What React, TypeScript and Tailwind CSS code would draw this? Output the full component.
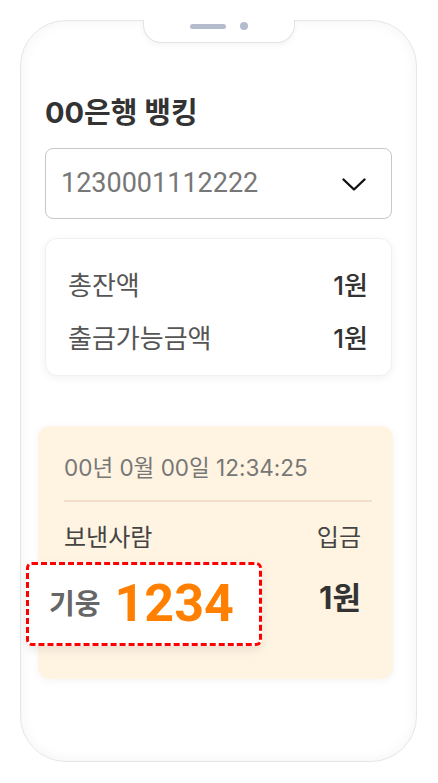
const font = { fontFamily: '"Inter", "Noto Sans CJK KR", sans-serif' }

function Notch() {
  return (
    <div className="absolute left-1/2 top-[-1px] flex h-[23px] w-[152px] -translate-x-1/2 items-center justify-center gap-[14px] rounded-b-[18px] border border-t-0 border-[#e4e4e4] bg-white shadow-[0_3px_6px_rgba(0,0,0,0.04)]">
      <span className="mt-[-10px] h-[5px] w-[36px] rounded-full bg-[#b4bccd]" />
      <span className="mt-[-10px] h-[8px] w-[8px] rounded-full bg-[#b4bccd]" />
    </div>
  )
}

function BalanceRow({ label, value }: { label: string; value: string }) {
  return (
    <div className="flex items-center justify-between leading-[32px]">
      <span className="text-[26px] text-[#555]">{label}</span>
      <span className="text-[26px] font-medium text-[#333]">{value}</span>
    </div>
  )
}

export default function App() {
  return (
    <div className="min-h-[783px] bg-white pt-[20px]" style={font}>
      <div className="relative ml-[20px] h-[742px] w-[397px] rounded-[46px] border border-[#e6e6e6] bg-white px-[24px] pt-[75px] shadow-[inset_0_0_14px_rgba(0,0,0,0.05)]">
        <Notch />

        <h1 className="text-[29px] font-bold leading-[34px] text-[#333]">00은행 뱅킹</h1>

        <button className="mt-[18px] flex h-[71px] w-full items-center justify-between rounded-[8px] border-[1.5px] border-[#c8c8c8] bg-white pl-[15px] pr-[25px]">
          <span className="text-[27px] text-[#777]" style={{ fontFamily: 'Roboto, "Noto Sans CJK KR", sans-serif' }}>
            1230001112222
          </span>
          <svg width="24" height="13" viewBox="0 0 24 13" fill="none" className="mt-[2px]">
            <polyline points="1.5,1.5 12,11.5 22.5,1.5" stroke="#111" strokeWidth="2.4" strokeLinecap="round" strokeLinejoin="round" />
          </svg>
        </button>

        <div className="mt-[19px] flex h-[138px] flex-col gap-[21px] rounded-[12px] border border-[#f0f0f0] bg-white pl-[22px] pr-[23px] pt-[31px] shadow-[0_2px_8px_rgba(0,0,0,0.06)]">
          <BalanceRow label="총잔액" value="1원" />
          <BalanceRow label="출금가능금액" value="1원" />
        </div>

        <div className="ml-[-7px] mt-[50px] h-[253px] w-[355px] rounded-[12px] bg-[#fff4e2] pl-[26px] pr-[21px] pt-[27px] shadow-[0_2px_10px_rgba(0,0,0,0.05)]">
          <p className="text-[22.5px] leading-[30px] text-[#777]">00년 0월 00일 12:34:25</p>
          <div className="mt-[17px] h-[2px] bg-[#f3dec9]" />
          <div className="mt-[21px] flex items-start justify-between pr-[11px]">
            <div className="flex flex-col">
              <span className="text-[24px] leading-[30px] text-[#444]">보낸사람</span>
              <div className="ml-[-38px] mt-[9px] flex h-[84px] w-[236px] items-center gap-[14px] rounded-[6px] border-[3px] border-dashed border-[#ff0000] bg-white pl-[20px] shadow-[0_4px_10px_rgba(0,0,0,0.08)]">
                <span className="text-[28px] font-bold text-[#666]">기웅</span>
                <span className="text-[52px] font-bold leading-none text-[#ff8000]" style={{ fontFamily: 'Roboto, sans-serif' }}>
                  1234
                </span>
              </div>
            </div>
            <div className="flex flex-col items-end">
              <span className="text-[24px] leading-[30px] text-[#444]">입금</span>
              <span className="mt-[27px] text-[31px] font-bold leading-[36px] text-[#333]">1원</span>
            </div>
          </div>
        </div>
      </div>
    </div>
  )
}
